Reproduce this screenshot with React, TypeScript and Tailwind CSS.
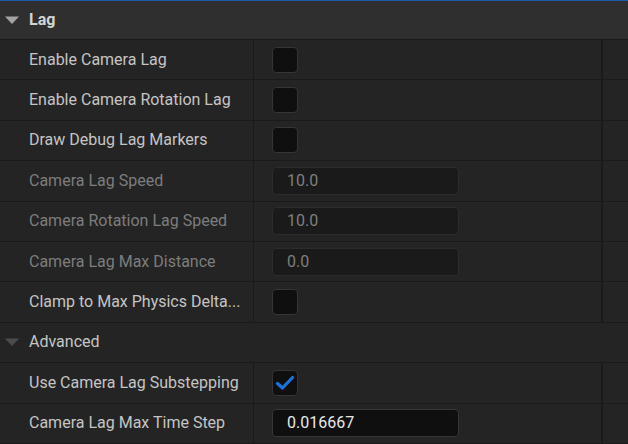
import type { ReactNode } from "react";

/* ------------------------------ data ------------------------------ */

type Row =
  | { kind: "check"; label: string; checked?: boolean; dim?: boolean }
  | { kind: "number"; label: string; value: string; dim?: boolean };

const lagRows: Row[] = [
  { kind: "check", label: "Enable Camera Lag" },
  { kind: "check", label: "Enable Camera Rotation Lag" },
  { kind: "check", label: "Draw Debug Lag Markers" },
  { kind: "number", label: "Camera Lag Speed", value: "10.0", dim: true },
  { kind: "number", label: "Camera Rotation Lag Speed", value: "10.0", dim: true },
  { kind: "number", label: "Camera Lag Max Distance", value: "0.0", dim: true },
  { kind: "check", label: "Clamp to Max Physics Delta..." },
];

const advancedRows: Row[] = [
  { kind: "check", label: "Use Camera Lag Substepping", checked: true },
  { kind: "number", label: "Camera Lag Max Time Step", value: "0.016667" },
];

/* ------------------------------ bits ------------------------------ */

function Caret({ className }: { className?: string }) {
  return (
    <svg width="16" height="10" viewBox="0 0 16 10" className={className}>
      <path d="M1 1.5 H15 L8 9 Z" fill="currentColor" />
    </svg>
  );
}

function Checkbox({ checked }: { checked?: boolean }) {
  return (
    <div className="flex size-[26px] items-center justify-center rounded-[4px] border border-[#353535] bg-[#0f0f0f]">
      {checked && (
        <svg width="20" height="16" viewBox="0 0 20 16">
          <path
            d="M2.5 8.5 L7.5 13 L17.5 2.5"
            fill="none"
            stroke="#1a72e0"
            strokeWidth="3.2"
            strokeLinecap="round"
            strokeLinejoin="round"
          />
        </svg>
      )}
    </div>
  );
}

function NumberBox({ value, dim }: { value: string; dim?: boolean }) {
  return (
    <div
      className={
        dim
          ? "flex h-[28px] w-[187px] items-center rounded-[4px] border border-[#2c2c2c] bg-[#1a1a1a] pl-[14px] text-[16px] text-[#7f7f7f]"
          : "flex h-[28px] w-[187px] items-center rounded-[4px] border border-[#363636] bg-[#0f0f0f] pl-[14px] text-[16px] text-[#e8e8e8]"
      }
    >
      {value}
    </div>
  );
}

function PropertyRow({ row }: { row: Row }) {
  return (
    <div className="flex h-[40.4px] border-b border-[#1a1a1a] bg-[#242424]">
      <div
        className={
          row.dim
            ? "flex w-[254px] items-center truncate border-r border-[#1a1a1a] pl-[29px] text-[16px] text-[#7d7d7d]"
            : "flex w-[254px] items-center truncate border-r border-[#1a1a1a] pl-[29px] text-[16px] text-[#c4c4c4]"
        }
      >
        {row.label}
      </div>
      <div className="flex w-[349px] items-center border-r-2 border-[#1a1a1a] pl-[18px]">
        {row.kind === "check" ? (
          <Checkbox checked={row.checked} />
        ) : (
          <NumberBox value={row.value} dim={row.dim} />
        )}
      </div>
      <div className="flex-1" />
    </div>
  );
}

function Category({
  title,
  children,
  main,
}: {
  title: string;
  children: ReactNode;
  main?: boolean;
}) {
  return (
    <>
      {main ? (
        <div className="flex h-[40px] items-center border-t border-[#1b5aa8] border-b border-b-[#1a1a1a] bg-[#2f2f2f]">
          <Caret className="ml-[4px] text-[#a3a3a3]" />
          <span className="ml-[9px] text-[16px] font-bold text-[#d4d4d4]">{title}</span>
        </div>
      ) : (
        <div className="flex h-[40.4px] items-center border-b border-[#1a1a1a] bg-[#242424]">
          <Caret className="ml-[4px] text-[#4c4c4c]" />
          <span className="ml-[9px] text-[16px] text-[#c4c4c4]">{title}</span>
        </div>
      )}
      {children}
    </>
  );
}

/* ------------------------------ page ------------------------------ */

export default function App() {
  return (
    <div
      className="h-[444px] w-[628px] overflow-hidden bg-[#242424]"
      style={{ fontFamily: "Roboto, 'Noto Sans', sans-serif" }}
    >
      <Category title="Lag" main>
        {lagRows.map((r) => (
          <PropertyRow key={r.label} row={r} />
        ))}
      </Category>
      <Category title="Advanced">
        {advancedRows.map((r) => (
          <PropertyRow key={r.label} row={r} />
        ))}
      </Category>
    </div>
  );
}
